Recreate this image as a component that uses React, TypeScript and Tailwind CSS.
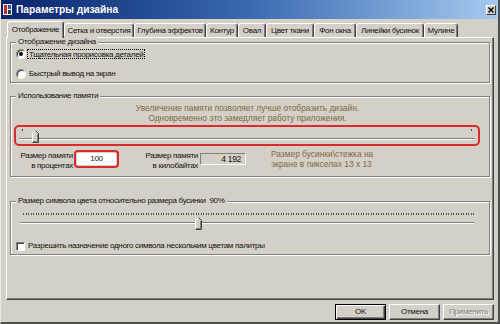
const tabs = [
  { name: 'Отображение', w: 'w-[57px]', active: true },
  { name: 'Сетка и отверстия', w: 'w-[70px]' },
  { name: 'Глубина эффектов', w: 'w-[72px]' },
  { name: 'Контур', w: 'w-[32px]' },
  { name: 'Овал', w: 'w-[28px]' },
  { name: 'Цвет ткани', w: 'w-[48px]' },
  { name: 'Фон окна', w: 'w-[42px]' },
  { name: 'Линейки бусинок', w: 'w-[68px]' },
  { name: 'Мулине', w: 'w-[34px]' },
];

const etched =
  'border border-[#808080] shadow-[inset_1px_1px_0_#fff,1px_1px_0_#fff]';
const sunken =
  'border border-t-[#808080] border-l-[#808080] border-b-white border-r-white';
const brown = "font-['Liberation_Sans',sans-serif] text-[8.4px] leading-[10px] tracking-normal text-[#7d6a3f]";

function Legend({ children }: { children: React.ReactNode }) {
  return (
    <span className="-mt-[7px] ml-[5px] px-[2px] w-fit bg-[#d4d0c8] leading-[12px] whitespace-nowrap">
      {children}
    </span>
  );
}

function Radio({ checked }: { checked?: boolean }) {
  return (
    <span className="w-[10px] h-[10px] rounded-full bg-white border border-t-[#808080] border-l-[#808080] border-b-white border-r-white shadow-[inset_1px_1px_0_#404040] flex items-center justify-center shrink-0">
      {checked && <span className="w-[4px] h-[4px] rounded-full bg-black" />}
    </span>
  );
}

function Thumb() {
  return (
    <svg width="7" height="13" viewBox="0 0 7 13">
      <path d="M0.5 12.5V3.5L3.5 0.5L6.5 3.5V12.5Z" fill="#d4d0c8" />
      <path d="M0.5 12.5V3.5L3.5 0.5" fill="none" stroke="#fff" />
      <path d="M3.5 0.5L6.5 3.5V12.5H0.5" fill="none" stroke="#404040" />
      <path d="M5.5 4V11.5H1" fill="none" stroke="#808080" />
    </svg>
  );
}

function TitleIcon() {
  return (
    <svg width="9" height="11" viewBox="0 0 9 11">
      <rect x="0" y="0" width="9" height="11" fill="#f2f2f2" />
      <rect x="1" y="1" width="3" height="9" fill="#c0282d" />
      <rect x="5" y="1" width="3" height="4" fill="#2d58b8" />
      <rect x="5" y="6" width="3" height="4" fill="#3a3a3a" />
    </svg>
  );
}

export default function App() {
  return (
    <div className="w-[500px] h-[324px] bg-[#d4d0c8] flex flex-col overflow-hidden border-l border-l-[#eceae4] border-r-2 border-r-[#505050] border-b-2 border-b-[#505050] font-['Liberation_Sans',sans-serif] text-[8px] tracking-[-0.3px] text-[#111]">
      {/* Title bar */}
      <div className="h-[19px] shrink-0 flex items-center bg-linear-to-r from-[#0a246a] via-[#3a6ab0] to-[#a6caf0] pl-[2px] pr-[2px]">
        <TitleIcon />
        <span className="ml-[4px] text-white font-bold text-[10.2px] tracking-normal">
          Параметры дизайна
        </span>
        <div className="ml-auto w-[10px] h-[10px] bg-[#d4d0c8] border border-t-white border-l-white border-b-[#404040] border-r-[#404040] flex items-center justify-center">
          <svg width="6" height="6" viewBox="0 0 6 6">
            <path d="M0.5 0.5L5.5 5.5M5.5 0.5L0.5 5.5" stroke="#000" strokeWidth="1.4" />
          </svg>
        </div>
      </div>

      <div className="flex-1 flex flex-col pl-[5px] pr-[4px]">
        {/* Tabs */}
        <div className="flex items-end h-[16px] mt-[2px] pl-[1px]">
          {tabs.map((t) =>
            t.active ? (
              <div
                key={t.name}
                className={`${t.w} h-[17px] -mb-[1px] relative z-10 bg-[#d4d0c8] border-t border-l border-t-white border-l-white border-r border-r-[#404040] shadow-[inset_-1px_0_0_#808080] rounded-t-[3px] flex items-center justify-center whitespace-nowrap`}
              >
                {t.name}
              </div>
            ) : (
              <div
                key={t.name}
                className={`${t.w} h-[14px] bg-[#d4d0c8] border-t border-l border-t-white border-l-white border-r border-r-[#404040] shadow-[inset_-1px_0_0_#808080] rounded-t-[3px] flex items-center justify-center whitespace-nowrap`}
              >
                {t.name}
              </div>
            )
          )}
        </div>

        {/* Tab panel */}
        <div className="h-[263px] flex flex-col border border-t-white border-l-white border-r-[#404040] border-b-[#404040] shadow-[inset_-1px_-1px_0_#808080] px-[3px]">
          {/* Group 1 */}
          <div className={`${etched} mt-[4px] h-[41px] flex flex-col`}>
            <Legend>Отображение дизайна</Legend>
            <div className="flex items-center h-[11px] ml-[5px]">
              <Radio checked />
              <span className="ml-[1px] px-[1px] h-[10px] leading-[9px] border border-dotted border-black">
                Тщательная прорисовка деталей
              </span>
            </div>
            <div className="flex items-center h-[11px] ml-[5px] mt-[9px]">
              <Radio />
              <span className="ml-[2px] px-[1px]">Быстрый вывод на экран</span>
            </div>
          </div>

          {/* Group 2 */}
          <div className={`${etched} mt-[13px] h-[81px] flex flex-col`}>
            <Legend>Использование памяти</Legend>
            <div className={`mt-[1px] text-center pr-[5px] ${brown}`}>
              <div>Увеличение памяти позволяет лучше отобразить дизайн.</div>
              <div>Одновременно это замедляет работу приложения.</div>
            </div>
            <div className="mt-[2px] ml-[3px] w-[466px] h-[21px] border-2 border-[#d92b2b] rounded-[5px]">
              <div className="relative h-[17px]">
                <div className="flex justify-between px-[6px] pt-[2px]">
                  <span className="w-px h-[2px] bg-[#404040]" />
                  <span className="w-px h-[2px] bg-[#404040]" />
                </div>
                <div className="mx-[3px] mt-[7px] h-[2px] border-t border-t-[#808080] border-b border-b-white" />
                <div className="absolute left-[16px] top-[3px]">
                  <Thumb />
                </div>
              </div>
            </div>
            <div className="flex items-start mt-[4px]">
              <div className="w-[62px] text-right leading-[10px] mt-[1px] whitespace-nowrap">
                <div>Размер памяти</div>
                <div>в процентах</div>
              </div>
              <div className="ml-[1px] w-[45px] h-[18px] border-2 border-[#d92b2b] rounded-[4px] p-px">
                <div className="h-full bg-white flex items-center justify-center leading-none">100</div>
              </div>
              <div className="ml-[24px] w-[55px] text-right leading-[10px] mt-[1px] whitespace-nowrap">
                <div>Размер памяти</div>
                <div>в килобайтах</div>
              </div>
              <div className={`${sunken} ml-[2px] mt-[3px] w-[46px] h-[12px] flex items-center justify-end pr-[4px] leading-none text-[8.5px]`}>
                4 192
              </div>
              <div className={`ml-[25px] -mt-[1px] ${brown}`}>
                <div>Размер бусинки\стежка на</div>
                <div>экране в пикселах 13 x 13</div>
              </div>
            </div>
          </div>

          {/* Group 3 */}
          <div className={`${etched} mt-[24px] h-[54px] flex flex-col`}>
            <Legend>Размер символа цвета относительно размера бусинки&nbsp;&nbsp;90%</Legend>
            <div className="relative mt-[6px]">
              <svg width="453" height="2" className="ml-[12px] block">
                {Array.from({ length: 181 }).map((_, i) => (
                  <rect key={i} x={Math.round(i * 2.5)} y="0" width="1" height="2" fill="#505050" />
                ))}
              </svg>
              <div className="ml-[9px] mr-[15px] mt-[7px] h-[2px] border-t border-t-[#808080] border-b border-b-white" />
              <div className="absolute left-[184px] top-[4px]">
                <Thumb />
              </div>
            </div>
            <div className="flex items-center mt-[17px] ml-[5px] h-[10px]">
              <span className={`${sunken} w-[9px] h-[9px] bg-white shadow-[inset_1px_1px_0_#404040]`} />
              <span className="ml-[3px] whitespace-nowrap">
                Разрешить назначение одного символа нескольким цветам палитры
              </span>
            </div>
          </div>
        </div>

        {/* Buttons */}
        <div className="flex justify-end gap-[3px] mt-[4px]">
          <button className="w-[51px] h-[16px] bg-[#d4d0c8] border border-black shadow-[inset_1px_1px_0_#fff,inset_-1px_-1px_0_#404040,inset_-2px_-2px_0_#808080] flex items-center justify-center leading-none">
            OK
          </button>
          <button className="w-[51px] h-[16px] bg-[#d4d0c8] border border-t-white border-l-white border-r-[#404040] border-b-[#404040] shadow-[inset_-1px_-1px_0_#808080] flex items-center justify-center leading-none">
            Отмена
          </button>
          <button className="w-[51px] h-[16px] bg-[#d4d0c8] border border-t-white border-l-white border-r-[#404040] border-b-[#404040] shadow-[inset_-1px_-1px_0_#808080] flex items-center justify-center leading-none text-[#808080] [text-shadow:1px_1px_0_#fff]">
            Применить
          </button>
        </div>
      </div>
    </div>
  );
}
